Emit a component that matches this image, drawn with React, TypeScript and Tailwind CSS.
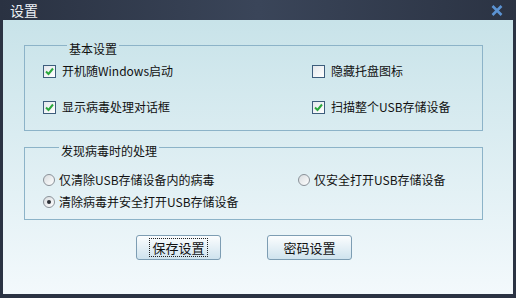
import React from "react";

const font = { fontFamily: '"Noto Sans CJK SC", "Noto Sans", sans-serif' };

function CheckBox({ checked, label }: { checked: boolean; label: string }) {
    return (
        <div className="flex items-center gap-[6px] h-5">
            <span className="flex h-[13px] w-[13px] items-center justify-center border border-[#3d5d7c] bg-gradient-to-br from-[#e4e8ec] to-[#ffffff]">
                {checked && (
                    <svg width="9" height="9" viewBox="0 0 9 9">
                        <path d="M1 4.5 L3.5 7 L8 1.5" fill="none" stroke="#2aa83c" strokeWidth="2" />
                    </svg>
                )}
            </span>
            <span className="text-[12px] leading-[12px] text-[#111]">{label}</span>
        </div>
    );
}

function Radio({ checked, label }: { checked: boolean; label: string }) {
    return (
        <div className="flex items-center gap-[4px] h-5">
            <span className="flex h-[12px] w-[12px] items-center justify-center rounded-full border border-[#8a9198] bg-gradient-to-br from-[#d8dcdf] to-[#ffffff]">
                {checked && <span className="h-[4px] w-[4px] rounded-full bg-[#2a2f35]"></span>}
            </span>
            <span className="text-[12px] leading-[12px] text-[#111]">{label}</span>
        </div>
    );
}

export default function App() {
    return (
        <div className="w-[516px] h-[298px] bg-[#2b3343] flex flex-col" style={font}>
            {/* Title bar */}
            <div className="h-5 flex items-center justify-between pl-[10px] pr-[13px] bg-gradient-to-r from-[#2a3242] via-[#3a4559] to-[#2b3343]">
                <span className="text-[14px] leading-[14px] text-[#eef2f6]">设置</span>
                <svg width="12" height="11" viewBox="0 0 12 11">
                    <path d="M1.5 1 L10.5 10 M10.5 1 L1.5 10" stroke="#5b93d3" strokeWidth="2.6" />
                </svg>
            </div>

            {/* Body */}
            <div className="flex-1 mx-[3px] mb-[4px] bg-gradient-to-b from-[#c8e3e9] to-[#f3f9fc] pt-[15px] pl-[21px] pr-[30px]">
                <fieldset className="border border-[#8cb3c8] pl-[18px] pb-[13px]">
                    <legend className="ml-[24px] px-[2px] pt-2 text-[12px] leading-[12px] text-[#111]">基本设置</legend>
                    <div className="flex flex-col gap-4 pt-[6px]">
                        <div className="flex">
                            <div className="w-[269px]"><CheckBox checked label="开机随Windows启动" /></div>
                            <CheckBox checked={false} label="隐藏托盘图标" />
                        </div>
                        <div className="flex">
                            <div className="w-[269px]"><CheckBox checked label="显示病毒处理对话框" /></div>
                            <CheckBox checked label="扫描整个USB存储设备" />
                        </div>
                    </div>
                </fieldset>

                <fieldset className="mt-[6px] border border-[#8cb3c8] pl-[18px] pb-[7px]">
                    <legend className="ml-[16px] px-[2px] pt-2 text-[12px] leading-[12px] text-[#111]">发现病毒时的处理</legend>
                    <div className="flex flex-col gap-[2px] pt-[13px]">
                        <div className="flex">
                            <div className="w-[255px]"><Radio checked={false} label="仅清除USB存储设备内的病毒" /></div>
                            <Radio checked={false} label="仅安全打开USB存储设备" />
                        </div>
                        <Radio checked label="清除病毒并安全打开USB存储设备" />
                    </div>
                </fieldset>

                <div className="flex gap-[46px] mt-[15px] ml-[112px]">
                    <button className="h-[25px] w-[85px] rounded-[3px] border border-[#7d9db3] bg-gradient-to-b from-[#fbfdfe] to-[#cfe3ee] flex items-center justify-center">
                        <span className="border border-dotted border-[#222] px-[2px] py-[2px] text-[13px] leading-[13px] text-[#111]">保存设置</span>
                    </button>
                    <button className="h-[25px] w-[85px] rounded-[3px] border border-[#7d9db3] bg-gradient-to-b from-[#fbfdfe] to-[#cfe3ee] flex items-center justify-center">
                        <span className="text-[13px] leading-[13px] text-[#111]">密码设置</span>
                    </button>
                </div>
            </div>
        </div>
    );
}
